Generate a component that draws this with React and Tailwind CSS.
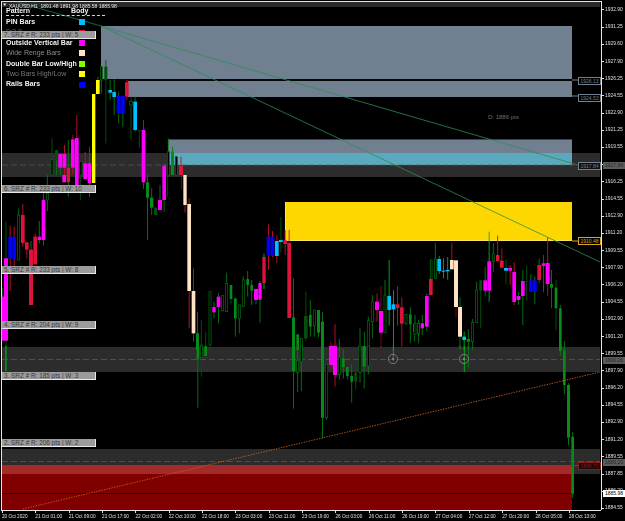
import React from "react";

const FILL = { m: "#ff00ff", c: "#dc143c", b: "#0000ff", y: "#00bfff", w: "#ffe4c4", l: "#ffff00", g: "#078a1c", k: "#064d0e" };
const WICK = { G: "#057a14", L: "#00b414", R: "#c80f2a", D: "#05520c", K: "#7c0a12" };

// [x1, x2, bodyTop, bodyBottom, kind, wickTop, wickBottom, wickColour], in 3x crop coordinates of each block
const BLOCKS = [
  [0, 0, [
    [152, 160, 478, 525, "h", 415, 525, "D"], [165, 175, 450, 480, "k", 450, 525, "G"],
    [175, 187, 462, 503, "m", 462, 525, "G"], [188, 199, 462, 503, "m", 435, 525, "R"],
    [200, 210, 503, 525, "c", 420, 525, "G"], [213, 224, 418, 503, "m", 405, 525, "R"],
    [225, 236, 414, 525, "m", 345, 525, "R"], [238, 247, 485, 525, "h", 485, 525, "D"],
    [250, 261, 490, 525, "m", 455, 525, "R"], [263, 274, 490, 525, "m", 440, 525, "R"],
    [276, 286, 282, 525, "l", 282, 525, "G"], [288, 299, 240, 282, "l", 230, 282, "G"],
    [300, 308, 200, 240, "h", 198, 280, "G"], [313, 322, 200, 240, "k", 180, 430, "D"],
    [325, 336, 270, 278, "y", 240, 300, "G"], [337, 348, 276, 291, "y", 238, 345, "G"],
    [350, 362, 288, 340, "b", 275, 370, "G"], [363, 374, 288, 340, "b", 288, 382, "G"],
    [375, 386, 247, 290, "c", 240, 300, "R"], [388, 398, 305, 315, "h", 290, 420, "D"],
    [400, 411, 305, 390, "y", 290, 395, "G"], [413, 423, 390, 392, "k", 390, 445, "D"],
    [425, 436, 390, 525, "m", 360, 525, "R"], [487, 498, 497, 525, "m", 490, 525, "G"],
    [501, 509, 455, 525, "h", 415, 525, "G"], [513, 522, 455, 525, "g", 440, 525, "G"],
    [525, 533, 470, 525, "h", 470, 525, "D"], [537, 549, 497, 525, "c", 470, 525, "R"],
  ]],
  [0, 175, [
    [5, 12, 365, 497, "m", 340, 497, "G"], [12, 24, 250, 497, "m", 140, 525, "D"],
    [25, 36, 185, 250, "b", 152, 348, "R"], [37, 48, 185, 252, "b", 155, 285, "R"],
    [52, 60, 120, 255, "h", 100, 255, "G"], [63, 74, 120, 204, "c", 87, 215, "R"],
    [75, 86, 202, 224, "c", 202, 250, "R"], [87, 99, 224, 390, "c", 198, 390, "G"],
    [100, 111, 185, 268, "c", 175, 268, "R"], [113, 123, 185, 195, "m", 138, 205, "G"],
    [125, 136, 75, 195, "m", 50, 212, "G"], [138, 146, 55, 75, "h", 0, 108, "G"],
    [187, 198, 0, 22, "m", 0, 22, "R"], [200, 210, 0, 22, "c", 0, 65, "G"],
    [225, 236, 0, 30, "m", 0, 30, "R"], [238, 244, 0, 12, "k", 0, 75, "D"],
    [250, 261, 0, 12, "m", 0, 12, "R"], [263, 274, 0, 24, "m", 0, 65, "R"],
    [276, 286, 0, 24, "l", 0, 24, "G"],
    [425, 436, 0, 22, "m", 0, 42, "R"], [438, 447, 22, 68, "g", 0, 195, "G"],
    [450, 460, 68, 98, "g", 40, 120, "G"], [462, 472, 98, 120, "k", 98, 120, "D"],
    [474, 486, 75, 105, "m", 30, 105, "G"], [487, 498, 0, 75, "m", 0, 110, "G"],
    [500, 506, 0, 2, "k", 0, 65, "D"], [541, 547, 0, 2, "k", 0, 42, "K"],
    [550, 560, 0, 90, "w", 0, 113, "R"], [562, 573, 87, 348, "w", 70, 460, "R"],
    [575, 586, 348, 475, "w", 280, 500, "R"], [588, 597, 475, 525, "g", 410, 525, "G"],
    [600, 608, 510, 525, "h", 435, 525, "D"], [613, 621, 520, 525, "h", 470, 525, "D"],
  ]],
  [0, 346, [
    [15, 20, 0, 75, "g", 0, 75, "G"], [590, 597, 0, 40, "g", 0, 185, "G"],
    [600, 608, 0, 35, "h", 0, 92, "D"], [613, 621, 0, 30, "g", 0, 30, "G"],
  ]],
  [210, 175, [
    [-4, 4, 350, 510, "h", 350, 525, "D"], [7, 17, 396, 412, "m", 380, 430, "G"],
    [20, 31, 365, 396, "m", 355, 445, "G"], [34, 42, 362, 408, "h", 362, 408, "G"],
    [46, 54, 325, 410, "h", 293, 410, "G"], [59, 67, 330, 372, "g", 330, 388, "D"],
    [72, 80, 370, 430, "g", 370, 485, "G"], [84, 92, 390, 430, "h", 390, 475, "G"],
    [96, 104, 315, 395, "h", 305, 395, "G"], [109, 117, 312, 330, "g", 288, 365, "G"],
    [121, 129, 330, 347, "g", 315, 390, "G"], [132, 144, 342, 375, "m", 342, 388, "G"],
    [145, 155, 324, 374, "m", 318, 443, "G"], [157, 167, 246, 324, "c", 236, 342, "L"],
    [170, 181, 185, 243, "b", 148, 285, "R"], [182, 193, 185, 243, "b", 168, 247, "R"],
    [195, 206, 198, 243, "y", 180, 265, "R"], [207, 218, 195, 201, "y", 126, 232, "D"],
    [220, 231, 196, 207, "c", 165, 240, "R"], [232, 243, 204, 429, "c", 165, 429, "R"],
    [246, 255, 427, 525, "g", 310, 525, "G"], [259, 267, 478, 525, "g", 478, 525, "G"],
    [270, 278, 490, 525, "h", 490, 525, "G"], [282, 293, 423, 490, "k", 350, 497, "D"],
    [297, 305, 420, 455, "g", 375, 485, "G"], [309, 317, 405, 452, "h", 405, 485, "G"],
    [321, 330, 405, 473, "g", 405, 487, "G"], [333, 342, 440, 525, "g", 410, 525, "G"],
    [357, 368, 518, 525, "m", 498, 525, "K"], [369, 381, 516, 525, "m", 448, 525, "R"],
    [384, 392, 524, 525, "h", 492, 525, "G"], [445, 455, 515, 525, "h", 460, 525, "G"],
    [458, 468, 513, 525, "g", 470, 525, "G"], [471, 479, 437, 525, "h", 425, 525, "G"],
    [483, 491, 380, 440, "h", 360, 490, "G"], [495, 507, 380, 405, "m", 355, 440, "R"],
    [507, 519, 408, 473, "m", 333, 525, "K"], [521, 529, 360, 473, "h", 315, 473, "G"],
    [532, 543, 363, 405, "y", 255, 452, "L"], [545, 556, 388, 403, "y", 345, 525, "L"],
    [557, 568, 388, 399, "c", 333, 452, "R"], [570, 581, 397, 446, "c", 367, 515, "R"],
    [584, 592, 418, 445, "h", 418, 450, "G"], [597, 605, 418, 448, "g", 397, 505, "G"],
    [609, 617, 447, 471, "g", 447, 500, "G"], [622, 630, 445, 475, "h", 435, 505, "G"],
  ]],
  [210, 346, [
    [246, 255, 0, 75, "g", 0, 188, "G"], [259, 267, 45, 80, "h", 0, 138, "G"],
    [270, 278, 0, 46, "h", 0, 135, "G"], [333, 342, 0, 215, "g", 0, 278, "G"],
    [345, 354, 55, 215, "h", 55, 222, "G"], [357, 369, 0, 57, "m", 0, 80, "K"],
    [369, 381, 0, 87, "m", 0, 122, "R"], [384, 392, 35, 85, "h", 0, 100, "G"],
    [396, 404, 37, 63, "g", 10, 98, "G"], [408, 416, 63, 90, "g", 63, 100, "G"],
    [421, 429, 90, 107, "g", 55, 170, "G"], [433, 441, 80, 107, "k", 50, 130, "D"],
    [446, 454, 0, 80, "h", 0, 110, "G"], [458, 467, 0, 62, "g", 0, 128, "G"],
    [471, 479, 0, 60, "h", 0, 85, "G"], [510, 516, 0, 2, "k", 0, 10, "K"],
    [546, 554, 0, 1, "k", 0, 45, "L"],
  ]],
  [415, 175, [
    [-4, 4, 445, 478, "h", 420, 478, "G"], [6, 14, 445, 475, "h", 445, 482, "G"],
    [17, 27, 445, 460, "m", 420, 480, "G"], [30, 41, 363, 455, "m", 355, 468, "G"],
    [42, 53, 312, 360, "c", 312, 360, "R"], [45, 52, 255, 312, "h", 255, 312, "G"],
    [57, 65, 252, 310, "h", 204, 310, "G"], [67, 78, 252, 288, "y", 243, 297, "L"],
    [80, 91, 287, 290, "y", 250, 310, "L"], [92, 104, 285, 289, "y", 246, 314, "L"],
    [105, 116, 255, 283, "w", 204, 283, "R"], [117, 129, 256, 396, "w", 256, 427, "K"],
    [129, 141, 396, 485, "w", 367, 525, "G"], [142, 153, 485, 495, "y", 470, 525, "L"],
    [155, 165, 492, 500, "g", 462, 525, "G"], [169, 177, 442, 500, "h", 432, 525, "G"],
    [181, 189, 345, 442, "h", 320, 442, "G"], [193, 201, 316, 347, "k", 316, 460, "D"],
    [205, 216, 316, 347, "m", 275, 362, "G"], [217, 228, 259, 347, "m", 170, 380, "L"],
    [231, 239, 237, 260, "h", 205, 290, "G"], [243, 253, 240, 258, "c", 182, 258, "R"],
    [255, 266, 257, 278, "c", 220, 280, "R"], [267, 279, 279, 287, "y", 255, 328, "D"],
    [280, 291, 279, 287, "m", 270, 330, "R"], [292, 303, 291, 381, "m", 262, 390, "R"],
    [305, 316, 363, 375, "m", 352, 390, "G"], [318, 329, 318, 363, "m", 285, 450, "G"],
    [331, 339, 318, 320, "k", 270, 378, "D"], [342, 353, 316, 351, "b", 297, 351, "G"],
    [354, 365, 316, 351, "b", 305, 388, "G"], [367, 378, 270, 315, "c", 250, 325, "G"],
    [380, 391, 265, 273, "m", 240, 352, "R"], [392, 404, 264, 327, "m", 187, 362, "R"],
    [405, 414, 327, 338, "g", 285, 400, "G"], [419, 427, 338, 400, "g", 315, 465, "D"],
    [432, 440, 400, 525, "g", 390, 525, "G"], [444, 452, 524, 525, "g", 498, 525, "G"],
  ]],
  [415, 346, [
    [131, 139, 0, 1, "h", 0, 8, "G"], [144, 152, 0, 1, "g", 0, 78, "L"],
    [156, 164, 0, 1, "g", 0, 65, "G"], [432, 440, 0, 15, "g", 0, 30, "G"],
    [444, 452, 14, 117, "g", 0, 145, "G"], [456, 465, 117, 275, "g", 112, 298, "G"],
    [469, 477, 272, 443, "g", 258, 455, "G"],
  ]],
];

const PRICES = [
  "1932.90", "1931.25", "1929.60", "1927.90", "1926.25", "1924.55", "1922.90", "1921.25", "1919.55", "1917.90",
  "1916.25", "1914.55", "1912.90", "1911.20", "1909.55", "1907.90", "1906.20", "1904.55", "1902.90", "1901.20",
  "1899.55", "1897.90", "1896.20", "1894.55", "1892.90", "1891.20", "1889.55", "1887.85", "1886.20", "1884.55",
];

const TIMES = [
  "20 Oct 2020", "21 Oct 01:00", "21 Oct 09:00", "21 Oct 17:00", "22 Oct 02:00", "22 Oct 10:00",
  "22 Oct 18:00", "23 Oct 03:00", "23 Oct 11:00", "23 Oct 19:00", "26 Oct 03:00", "26 Oct 11:00",
  "26 Oct 19:00", "27 Oct 04:00", "27 Oct 12:00", "27 Oct 20:00", "28 Oct 05:00", "28 Oct 13:00",
];

const LEGEND = [
  ["PIN Bars", "text-[#f2f2f2] font-bold", "bg-[#00bfff]"],
  ["DOJI", "text-[#5a5a5a]", "bg-[#dc143c]"],
  ["Outside Vertical Bar", "text-[#f2f2f2] font-bold", "bg-[#ff00ff]"],
  ["Wide Renge Bars", "text-[#8a8a8a]", "bg-[#ffe4c4]"],
  ["Double Bar Low/High", "text-[#f2f2f2] font-bold", "bg-[#7fff00]"],
  ["Two Bars High/Low", "text-[#777777]", "bg-[#ffff00]"],
  ["Rails Bars", "text-[#f2f2f2] font-bold", "bg-[#0000ff]"],
];

function Candles() {
  return BLOCKS.flatMap(([ox, oy, rows], b) =>
    rows.map(([x1, x2, v1, v2, kind, w1, w2, wc], i) => {
      const left = ox + x1 / 3;
      const width = (x2 - x1) / 3;
      const mid = left + width / 2;
      const hollow = kind === "h";
      return (
        <g key={`${b}-${i}`}>
          <line x1={mid} x2={mid} y1={oy + w1 / 3} y2={oy + w2 / 3} stroke={WICK[wc]} strokeWidth="0.9" />
          {hollow ? (
            <rect x={left + 0.3} y={oy + v1 / 3} width={width - 0.6} height={(v2 - v1) / 3} fill="#000" stroke="#056b12" strokeWidth="0.7" />
          ) : (
            <rect x={left} y={oy + v1 / 3} width={width} height={(v2 - v1) / 3} fill={FILL[kind]} />
          )}
        </g>
      );
    })
  );
}

function SrzLabel({ className, children }) {
  return (
    <div className={`absolute left-0 w-[94px] h-[8px] pl-[2px] bg-[#9b9b9b] border-r border-b border-[#e8e8e8] text-[#3a3a3a] text-[6.4px] leading-[7px] whitespace-nowrap overflow-hidden ${className}`}>
      {children}
    </div>
  );
}

function PriceTag({ className, children }) {
  return (
    <div className={`absolute w-[23px] h-[8px] border text-[5px] leading-[6px] text-center ${className}`}>{children}</div>
  );
}

export default function App() {
  return (
    <div className="w-[625px] h-[521px] bg-black flex flex-col pt-px pl-px overflow-hidden font-['Liberation_Sans',sans-serif]">
      <div className="flex h-[509px]">
        <div className="relative w-[600px] border-l border-t border-[#e6e6e6]">
          {/* title strip */}
          <div className="h-[5px] bg-[#2a2a2a] w-[598px]" />
          {/* bands and zones */}
          <div className="absolute left-0 top-[151px] w-[598px] h-[24px] bg-[#2c2c2c]" />
          <div className="absolute left-0 top-[345px] w-[598px] h-[25px] bg-[#2c2c2c]" />
          <div className="absolute left-0 top-[447px] w-[598px] h-[25px] bg-[#2c2c2c]" />

          <div className="absolute left-[99px] top-[24px] w-[471px] h-[53px] bg-[#708090]" />
          <div className="absolute left-[126px] top-[79px] w-[444px] h-[16px] bg-[#708090]" />
          <div className="absolute left-[99px] top-[77px] w-[471px] h-[2px] bg-[#050505]" />

          <div className="absolute left-[166px] top-[137px] w-[404px] h-[26px] bg-[#708090] border-t border-[#3c444c] flex flex-col justify-end">
            <div className="h-[12px] bg-[#5aa9bf]" />
          </div>

          <div className="absolute left-[283px] top-[200px] w-[287px] h-[39px] bg-[#ffd700] border-l border-b border-[#ffe65c]" />

          <div className="absolute left-0 top-[463px] w-[570px] h-[45px] bg-[#800000]">
            <div className="h-[9px] bg-[#a52a2a]" />
          </div>
          <div className="absolute left-0 top-[491px] w-[570px] h-px bg-[#1a0000]" />

          {/* chart drawing */}
          <svg className="absolute -left-0.5 -top-0.5 w-[601px] h-[510px]" viewBox="0 0 601 510">
            <line x1="2" x2="600" y1="165" y2="165" stroke="#5c5c5c" strokeWidth="0.7" strokeDasharray="6 3" />
            <line x1="2" x2="600" y1="359.5" y2="359.5" stroke="#5c5c5c" strokeWidth="0.7" strokeDasharray="6 3" />
            <line x1="2" x2="600" y1="461.5" y2="461.5" stroke="#5c5c5c" strokeWidth="0.7" strokeDasharray="6 3" />
            <Candles />
            <line x1="17" y1="2" x2="101" y2="26" stroke="#1f7a4d" strokeWidth="0.8" />
            <line x1="101" y1="26" x2="578" y2="165" stroke="#2e8b57" strokeWidth="0.8" />
            <line x1="101" y1="26" x2="600" y2="262" stroke="#2e8b57" strokeWidth="0.8" />
            <line x1="23" y1="509" x2="600" y2="372" stroke="#c8641e" strokeWidth="0.9" strokeDasharray="1.3 1.3" />
            <circle cx="393" cy="359" r="4.6" fill="none" stroke="#8c8c8c" strokeWidth="0.8" />
            <circle cx="393" cy="359" r="1" fill="#8c8c8c" />
            <circle cx="464" cy="359" r="4.6" fill="none" stroke="#8c8c8c" strokeWidth="0.8" />
            <circle cx="464" cy="359" r="1" fill="#8c8c8c" />
            <line x1="572" x2="578" y1="80" y2="80" stroke="#708090" />
            <line x1="572" x2="578" y1="96" y2="96" stroke="#708090" />
            <line x1="572" x2="578" y1="241" y2="241" stroke="#daa520" />
            <line x1="572" x2="578" y1="465.5" y2="465.5" stroke="#a52a2a" />
            <polygon points="3,3.5 6.5,3.5 4.7,6" fill="#e6e6e6" />
          </svg>

          {/* title text */}
          <div className="absolute left-[7px] top-px text-[5px] leading-[6px] text-[#e8e8e8] whitespace-nowrap blur-[0.2px]">
            XAUUSD,H1&nbsp; 1891.48 1891.98 1885.58 1885.98
          </div>

          {/* legend */}
          <div className="absolute left-[4px] top-[5px] w-[102px] flex flex-col text-[7px] leading-[10.4px] blur-[0.25px]">
            <div className="flex h-[9px] font-bold text-[#f2f2f2] leading-[7px] border-b border-dashed border-[#ffe800] w-[99px]">
              <span className="w-[65px]">Pattern</span>
              <span>Body</span>
            </div>
            <div className="h-px" />
            {LEGEND.map(([name, text, swatch]) => (
              <div key={name} className="flex items-center h-[10.4px]">
                <span className={`w-[73px] whitespace-nowrap ${text}`}>{name}</span>
                <span className={`w-[6px] h-[6px] ${swatch}`} />
              </div>
            ))}
          </div>

          {/* zone labels */}
          <SrzLabel className="top-[29px]">7. SRZ # R: 233 pts | W: 5</SrzLabel>
          <SrzLabel className="top-[183px]">6. SRZ # R: 233 pts | W: 10</SrzLabel>
          <SrzLabel className="top-[264px]">5. SRZ # R: 233 pts | W: 8</SrzLabel>
          <SrzLabel className="top-[319px]">4. SRZ # R: 204 pts | W: 9</SrzLabel>
          <SrzLabel className="top-[370px]">3. SRZ # R: 185 pts | W: 3</SrzLabel>
          <SrzLabel className="top-[437px]">2. SRZ # R: 206 pts | W: 2</SrzLabel>

          <div className="absolute left-[486px] top-[112px] text-[6px] leading-[7px] text-[#6e6e6e]">D: 1886 pts</div>

          {/* tags on the zones */}
          <PriceTag className="left-[576px] top-[75px] border-[#708090] text-[#708090] bg-black">1926.13</PriceTag>
          <PriceTag className="left-[576px] top-[92px] border-[#708090] text-[#708090] bg-black">1924.53</PriceTag>
          <PriceTag className="left-[576px] top-[160px] border-[#708090] text-[#708090] bg-[#101010]">1917.84</PriceTag>
          <PriceTag className="left-[576px] top-[235px] border-[#daa520] text-[#daa520] bg-black">1910.48</PriceTag>
          <PriceTag className="left-[576px] top-[460px] border-[#8b1a1a] text-[#8b1a1a] bg-[#1c0505]">1888.70</PriceTag>

          {/* tags on the price scale */}
          <div className="absolute left-[601px] top-[160px] w-[22px] h-[7px] bg-[#5c5c5c] text-[#2a2a2a] text-[5px] leading-[7px] text-center z-10">1917.84</div>
          <div className="absolute left-[601px] top-[355px] w-[22px] h-[7px] bg-[#5c5c5c] text-[#2a2a2a] text-[5px] leading-[7px] text-center z-10">1899.26</div>
          <div className="absolute left-[601px] top-[457px] w-[22px] h-[7px] bg-[#5c5c5c] text-[#2a2a2a] text-[5px] leading-[7px] text-center z-10">1889.20</div>
          <div className="absolute left-[601px] top-[488px] w-[22px] h-[7px] bg-white text-black text-[5px] leading-[7px] text-center z-10">1885.98</div>
        </div>

        {/* price scale */}
        <div className="w-[23px] border-l border-[#e6e6e6] pt-[0.4px] flex flex-col">
          {PRICES.map((price) => (
            <div key={price} className="flex items-center h-[17.2px] shrink-0">
              <span className="w-[2px] h-px bg-[#e6e6e6]" />
              <span className="ml-px text-[4.9px] leading-[6px] text-[#e0e0e0] blur-[0.2px]">{price}</span>
            </div>
          ))}
        </div>
      </div>

      {/* time scale */}
      <div className="flex w-[600px] h-[11px] border-t border-[#e6e6e6] pl-px">
        {TIMES.map((time) => (
          <div key={time} className="w-[33.35px] shrink-0 flex flex-col">
            <span className="w-px h-[2px] bg-[#e6e6e6]" />
            <span className="text-[4.7px] leading-[6px] mt-px text-[#e0e0e0] whitespace-nowrap blur-[0.2px]">{time}</span>
          </div>
        ))}
      </div>
    </div>
  );
}
